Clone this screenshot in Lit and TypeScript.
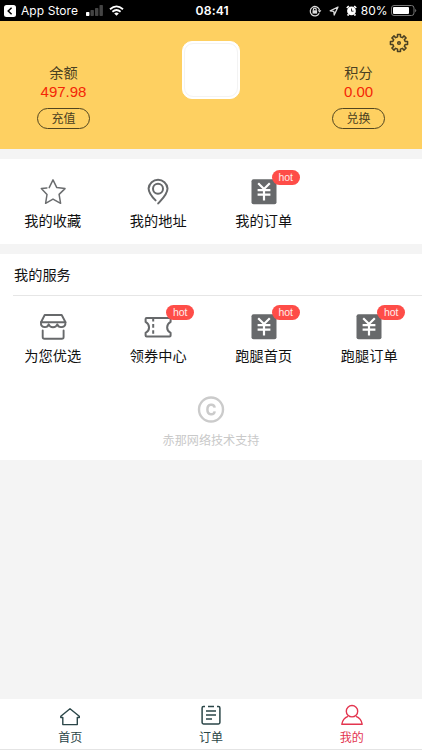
import { LitElement, html, css, svg, nothing } from "lit";
import { customElement, property } from "lit/decorators.js";

const yen = svg`
  <rect x="1.5" y="1.2" width="25" height="25" rx="2" fill="#67696b"/>
  <path d="M8.200 5.200l5.800 5.800 5.800-5.800M14 10.500v12M7.600 12.200h12.800M7.600 16.600h12.800" fill="none" stroke="#fff" stroke-width="2.200"/>`;

const icons: Record<string, unknown> = {
  star: svg`<path d="M10.2 9.6L14 1.9l3.800 7.700 8.200 1-5.900 5.800 1.500 8.900L14 21.100l-7.400 4.200 1.400-8.800L2.300 10.600l5.600-.7" fill="none" stroke="#6b6d6f" stroke-width="1.500" stroke-linejoin="round" stroke-linecap="round"/>`,
  pin: svg`<path d="M14.200 25.400c4.300-4.800 9.300-9.200 9.300-15A9.500 9.500 0 0 0 4.600 10.400c0 4.700 3.400 8.300 7 12" fill="none" stroke="#67696b" stroke-width="2" stroke-linecap="round"/>
    <circle cx="14" cy="10.700" r="5" fill="none" stroke="#67696b" stroke-width="2"/>`,
  yen,
  shop: svg`<g fill="none" stroke="#67696b" stroke-width="1.900" stroke-linejoin="round" stroke-linecap="round">
    <path d="M5.700 2h17l3.800 7.300H2z"/>
    <path d="M2 9.300c-.6 6 6.700 6 7.700 2 1.300 4 7.300 4 8.600 0 1 4 8.600 4 8.100-2"/>
    <path d="M3.700 17.400v6.500q0 1.800 1.800 1.800h17.300q1.800 0 1.800-1.800v-6.500"/></g>`,
  ticket: svg`<g fill="none" stroke="#67696b" stroke-width="2" stroke-linejoin="round">
    <path d="M2.600 5h23q1 0 1 1v2.900c-4.600 2.600-4.600 8.500 0 10.900v2.700q0 1-1 1h-23q-1 0-1-1v-2.700c4.600-2.400 4.600-8.300 0-10.900V6q0-1 1-1z"/>
    <path d="M9.200 6v17" stroke-dasharray="3.600 2.500" stroke-dashoffset="1"/></g>`,
};

interface Entry { icon: string; label: string; hot?: boolean }

@customElement("menu-entry")
class MenuEntry extends LitElement {
  @property() icon = "";
  @property() label = "";
  @property({ type: Boolean }) hot = false;
  static styles = css`
    :host { display: flex; flex-direction: column; align-items: center; }
    .pic { position: relative; width: 28px; height: 28px; }
    .glyph { display: block; width: 28px; height: 28px; }
    .badge { position: absolute; left: 22px; top: -8px; width: 28px; height: 15px; border-radius: 8px;
      background: #fe4d48; color: #ffecea; font-family: "Liberation Sans", sans-serif; font-size: 10.500px; line-height: 15px; text-align: center; }
    .label { font-size: 14.200px; line-height: 20px; margin-top: 5px; color: #111; white-space: nowrap; }
  `;
  render() {
    return html`
      <div class="pic">
        <svg class="glyph" viewBox="0 0 28 28">${icons[this.icon]}</svg>
        ${this.hot ? html`<span class="badge">hot</span>` : nothing}
      </div>
      <div class="label">${this.label}</div>`;
  }
}

@customElement("app-root")
class AppRoot extends LitElement {
  static styles = css`
    * { box-sizing: border-box; }
    :host { display: flex; flex-direction: column; height: 750px; background: #f4f4f4;
      font-family: Inter, "Noto Sans CJK SC", sans-serif; overflow: hidden; }
    svg { display: block; flex: none; }
    .status { height: 21px; flex: none; background: #000; color: #fff; display: grid; grid-template-columns: 1fr auto 1fr;
      align-items: center; padding: 0 5.500px 0 4px; font-size: 12px; line-height: 21px; }
    .left, .right { display: flex; align-items: center; }
    .right { justify-content: flex-end; }
    .store { margin: 0 8px 0 5px; letter-spacing: .08px; }
    .wifi { margin-left: 6px; }
    .time { font-weight: 600; font-size: 12.200px; letter-spacing: .15px; padding-left: 4px; }
    .pct { margin: 0 3px 0 3.500px; }
    .gap { margin-left: 7px; }
    .head { height: 128px; flex: none; background: #fed061; display: grid; grid-template-columns: 127px 1fr 127px; position: relative; }
    .account { display: flex; flex-direction: column; align-items: center; padding-top: 42px; color: #4a4022; }
    .name { font-size: 14.200px; line-height: 20px; }
    .value { font-family: "Liberation Sans", sans-serif; font-size: 15px; line-height: 18px; color: #f42606; }
    .pill { margin-top: 7px; width: 53px; height: 21px; border: 1.200px solid #514520; border-radius: 11px;
      font-size: 12px; line-height: 20px; text-align: center; }
    .avatar { width: 58px; height: 58px; margin: 20px auto 0; background: #fff; border-radius: 10px; border: 1px solid #fff; padding: 1px; }
    .face { height: 54px; border: 1px solid #f3f3f3; border-radius: 9px; }
    .gear { position: absolute; right: 13px; top: 11.500px; }
    .panel { background: #fff; flex: none; margin-top: 10px; }
    .grid { display: grid; grid-template-columns: repeat(4, 1fr); }
    .first { height: 85px; padding-top: 19px; }
    .services { height: 206px; }
    .title { height: 42px; margin-left: 13px; padding-left: 1px; border-bottom: 1px solid #e6e6e6; font-size: 14.200px; line-height: 42px; color: #111; }
    .second { padding-top: 17px; }
    .support { margin-top: 29px; display: flex; flex-direction: column; align-items: center; color: #c9c9c9; font-size: 12.100px; line-height: 18px; }
    .copy { margin-bottom: 9px; }
    .tabs { margin-top: auto; flex: none; height: 51px; background: #fff; border-bottom: 1px solid #e4e4e4;
      display: grid; grid-template-columns: repeat(3, 1fr); }
    .tab { display: flex; flex-direction: column; align-items: center; padding-top: 5px; color: #2b4648; font-size: 12px; line-height: 18px; }
    .tab svg { margin-bottom: 3px; }
    .active { color: #e3354f; }
  `;

  private top: Entry[] = [
    { icon: "star", label: "我的收藏" },
    { icon: "pin", label: "我的地址" },
    { icon: "yen", label: "我的订单", hot: true },
  ];
  private services: Entry[] = [
    { icon: "shop", label: "为您优选" },
    { icon: "ticket", label: "领券中心", hot: true },
    { icon: "yen", label: "跑腿首页", hot: true },
    { icon: "yen", label: "跑腿订单", hot: true },
  ];

  private entries(list: Entry[]) {
    return list.map(e => html`<menu-entry .icon=${e.icon} .label=${e.label} .hot=${!!e.hot}></menu-entry>`);
  }

  private account(name: string, value: string, action: string) {
    return html`<div class="account">
      <div class="name">${name}</div><div class="value">${value}</div><div class="pill">${action}</div>
    </div>`;
  }

  private gearPath() {
    const pts: string[] = [];
    for (let i = 0; i < 8; i++) {
      const spots: [number, number][] = [[-13, 6.300], [-10, 8.700], [10, 8.700], [13, 6.300]];
      for (const [d, r] of spots) {
        const a = ((i * 45 + d) * Math.PI) / 180;
        pts.push(`${(10 + r * Math.sin(a)).toFixed(2)} ${(10 - r * Math.cos(a)).toFixed(2)}`);
      }
    }
    return `M${pts.join("L")}Z`;
  }

  render() {
    return html`
      <div class="status">
        <div class="left">
          <svg width="12" height="12" viewBox="0 0 12 12"><rect width="12" height="12" rx="2.500" fill="#fff"/><path d="M7.600 2.700L4.200 6l3.400 3.300" fill="none" stroke="#000" stroke-width="1.500"/></svg>
          <span class="store">App Store</span>
          <svg width="17" height="11" viewBox="0 0 17 11"><rect y="7" width="3.400" height="4" rx=".7" fill="#fff"/><g fill="#444"><rect x="4.500" y="5" width="3.400" height="6" rx=".7"/><rect x="9" y="3" width="3.400" height="8" rx=".7"/><rect x="13.500" y="0" width="3.400" height="11" rx=".7"/></g></svg>
          <svg class="wifi" width="15" height="11" viewBox="0 0 15 11"><g fill="none" stroke="#fff" stroke-width="1.800"><path d="M1 4.200q6.500-5.700 13 0M3.400 6.700q4.100-3.500 8.200 0"/></g><path d="M5.200 8.500q2.300-1.800 4.600 0L7.500 10.800z" fill="#fff"/></svg>
        </div>
        <div class="time">08:41</div>
        <div class="right">
          <svg width="13" height="12" viewBox="0 0 13 12"><g fill="none" stroke="#ddd" stroke-width="1.200"><path d="M10.200 8.200a4.700 4.700 0 1 1 .3-3.200M4.400 5.500v-1a1.400 1.400 0 0 1 2.800 0v1"/></g><rect x="3.500" y="5.300" width="4.600" height="3.300" fill="#ddd"/><path d="M8.800 5.200h3.600l-1.800 2.500z" fill="#ddd"/></svg>
          <svg class="gap" width="10" height="10" viewBox="0 0 10 10"><path d="M9 1L1.200 4.800l3.600.5.400 3.700z" fill="none" stroke="#ddd" stroke-width="1.300" stroke-linejoin="round"/></svg>
          <svg class="gap" width="11" height="11" viewBox="0 0 11 11"><circle cx="5.500" cy="5.900" r="4.400" fill="#fff"/><path d="M.8 3l2-2M10.200 3l-2-2M2.600 9.200l-1 1.400M8.400 9.200l1 1.400" stroke="#fff" stroke-width="1.700"/><path d="M5.500 3.500v2.700h2" fill="none" stroke="#222" stroke-width=".9"/></svg>
          <span class="pct">80%</span>
          <svg width="26" height="11" viewBox="0 0 26 11"><rect x=".5" y=".5" width="22.500" height="10" rx="2.500" fill="none" stroke="#777"/><rect x="2" y="2" width="16" height="7" rx="1" fill="#fff"/><path d="M24.200 3.700q2 1.800 0 3.600z" fill="#777"/></svg>
        </div>
      </div>
      <div class="head">
        ${this.account("余额", "497.98", "充值")}
        <div class="avatar"><div class="face"></div></div>
        ${this.account("积分", "0.00", "兑换")}
        <svg class="gear" width="20" height="20" viewBox="0 0 20 20"><g fill="none" stroke="#4a4022" stroke-width="1.500" stroke-linejoin="round"><path d=${this.gearPath()}/><circle cx="10" cy="10" r="1.300"/></g></svg>
      </div>
      <div class="panel grid first">${this.entries(this.top)}</div>
      <div class="panel services">
        <div class="title">我的服务</div>
        <div class="grid second">${this.entries(this.services)}</div>
        <div class="support">
          <svg class="copy" width="28" height="28" viewBox="0 0 28 28"><g fill="none" stroke="#cbcbcb"><circle cx="14" cy="14.500" r="12" stroke-width="2.400"/><path d="M17.700 12.600C17 8.600 10.400 8.400 10.400 14.500s6.600 5.900 7.300 1.900" stroke-width="2.500"/></g></svg>
          <div>赤那网络技术支持</div>
        </div>
      </div>
      <div class="tabs">
        <div class="tab">
          <svg width="22" height="22" viewBox="0 0 22 22"><path d="M11 4.700L1.800 12.300v1.200h2v7.100h14.500v-7.100h2v-1.200z" fill="none" stroke="#2b4648" stroke-width="1.400" stroke-linejoin="round"/></svg>
          <span>首页</span></div>
        <div class="tab">
          <svg width="22" height="22" viewBox="0 0 22 22"><g fill="none" stroke="#2b4648" stroke-width="1.500"><path d="M5 2.500H3.500q-1.400 0-1.400 1.400v14.700q0 1.400 1.400 1.400h15q1.400 0 1.400-1.400V3.900q0-1.400-1.400-1.400H17M8 2.500h6M6 7h10M6 11h10M6 15h6"/></g></svg>
          <span>订单</span></div>
        <div class="tab active">
          <svg width="22" height="22" viewBox="0 0 22 22"><g fill="none" stroke="#e3354f" stroke-width="1.400" stroke-linejoin="round"><circle cx="11" cy="7.200" r="5.700"/><path d="M7 12.300c-4 1.500-5.700 4.500-6.200 8h20.400c-.5-3.500-2.200-6.500-6.200-8"/></g></svg>
          <span>我的</span></div>
      </div>`;
  }
}
